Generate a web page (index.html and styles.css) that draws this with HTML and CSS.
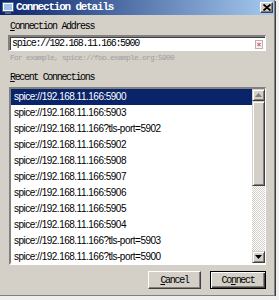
FILE: index.html
```html
<!DOCTYPE html>
<html lang="en">
<head>
<meta charset="UTF-8" />
<meta name="viewport" content="width=device-width, initial-scale=1.0" />
<title>Connection details</title>
<link rel="stylesheet" href="styles.css">
</head>
<body>

<div class="window">
  <!-- Title bar -->
  <div class="titlebar">
    <svg class="app-icon" width="12" height="12" viewBox="0 0 12 12">
      <rect x="0.5" y="0.5" width="11" height="9" fill="#fff" stroke="#56648c"/>
      <rect x="2" y="2" width="8" height="6" fill="#9cc0ec"/>
      <rect x="3" y="10" width="6" height="2" fill="#56648c"/>
    </svg>
    <span class="title">Connection details</span>
    <div class="close">
      <svg width="8" height="7" viewBox="0 0 8 7">
        <path d="M0.5 0.5 L7.5 6.5 M7.5 0.5 L0.5 6.5" stroke="#000" stroke-width="1.8"/>
      </svg>
    </div>
  </div>

  <div class="content">
    <div class="label"><u>C</u>onnection Address</div>
    <div class="input">
      <span class="input-text">spice://192.168.11.166:5900</span>
      <svg class="clear" width="8" height="9" viewBox="0 0 8 9">
        <rect x="0.5" y="0.5" width="7" height="8" fill="#f6f6f6" stroke="#b4b4b4"/>
        <path d="M2.5 3 L5.5 6 M5.5 3 L2.5 6" stroke="#e8607a" stroke-width="1.2"/>
      </svg>
    </div>
    <div class="hint">For example, spice://foo.example.org:5900</div>

    <div class="label label-recent"><u>R</u>ecent Connections</div>
    <div class="list">
      <ul class="rows">
        <li class="selected">spice://192.168.11.166:5900</li>
        <li>spice://192.168.11.166:5903</li>
        <li>spice://192.168.11.166?tls-port=5902</li>
        <li>spice://192.168.11.166:5902</li>
        <li>spice://192.168.11.166:5908</li>
        <li>spice://192.168.11.166:5907</li>
        <li>spice://192.168.11.166:5906</li>
        <li>spice://192.168.11.166:5905</li>
        <li>spice://192.168.11.166:5904</li>
        <li>spice://192.168.11.166?tls-port=5903</li>
        <li>spice://192.168.11.166?tls-port=5900</li>
      </ul>
      <div class="scrollbar">
        <div class="sb-btn">
          <svg width="7" height="4" viewBox="0 0 7 4"><path d="M3.5 0 L7 4 L0 4 Z" fill="#808080"/></svg>
        </div>
        <div class="sb-thumb"></div>
        <div class="sb-track"></div>
        <div class="sb-btn">
          <svg width="7" height="4" viewBox="0 0 7 4"><path d="M0 0 L7 0 L3.5 4 Z" fill="#000"/></svg>
        </div>
      </div>
    </div>

    <div class="buttons">
      <div class="btn"><u>C</u>ancel</div>
      <div class="btn btn-default">Co<u>n</u>nect</div>
    </div>
  </div>
</div>

</body>
</html>
```

FILE: styles.css
```css
body {
  margin: 0;
  background-color: #f0f0f0;
  font-family: "Liberation Mono", monospace;
}

.window {
  width: 274px;
  height: 295px;
  background-color: #d4d0c8;
  border-right: 1px solid #808080;
  border-bottom: 1px solid #808080;
  box-shadow: 1px 1px 0 #404040;
  overflow: hidden;
}

.titlebar {
  height: 15px;
  display: flex;
  align-items: center;
  background: linear-gradient(to right, #0a246a, #a6caf0);
  padding-left: 2px;
}

.app-icon {
  flex: none;
}

.title {
  margin-left: 2px;
  color: white;
  font-weight: bold;
  font-size: 11px;
  letter-spacing: -1.2px;
  line-height: 15px;
}

.close {
  margin-left: auto;
  margin-right: 1px;
  width: 11px;
  height: 9px;
  display: flex;
  align-items: center;
  justify-content: center;
  background-color: #d4d0c8;
  border-top: 1px solid #fff;
  border-left: 1px solid #fff;
  border-right: 1px solid #404040;
  border-bottom: 1px solid #404040;
  box-shadow: inset -1px -1px 0 #808080;
}

.content {
  padding: 6px 8px 0 8px;
  display: flex;
  flex-direction: column;
}

.label {
  height: 12px;
  line-height: 12px;
  padding-left: 2px;
  font-size: 10px;
  letter-spacing: -1.33px;
  color: #000;
}

.label-recent {
  margin-top: 9px;
}

.input {
  margin-top: 2px;
  height: 11px;
  display: flex;
  align-items: center;
  background-color: white;
  border-top: 2px solid #808080;
  border-left: 2px solid #808080;
  border-right: 1px solid #fff;
  border-bottom: 1px solid #fff;
  box-shadow: inset 1px 1px 0 #404040;
  padding: 1px 2px 1px 2px;
}

.input-text {
  font-size: 10px;
  letter-spacing: -1.3px;
  color: #000;
}

.clear {
  margin-left: auto;
  margin-top: 2px;
}

.hint {
  margin-top: 2px;
  height: 10px;
  line-height: 10px;
  padding-left: 2px;
  font-size: 8px;
  letter-spacing: -0.8px;
  color: #a0a0a0;
}

.list {
  margin-top: 3px;
  margin-left: 1px;
  height: 174px;
  display: flex;
  background-color: white;
  border-top: 2px solid #808080;
  border-left: 2px solid #808080;
  border-right: 1px solid #fff;
  border-bottom: 2px solid #fff;
}

.rows {
  flex: 1;
  margin: 0;
  padding: 0;
  list-style: none;
  overflow: hidden;
}

.rows li {
  height: 16px;
  line-height: 16px;
  padding-left: 3px;
  font-family: "Liberation Sans", Arial, sans-serif;
  font-size: 10px;
  letter-spacing: -0.5px;
  color: #000;
  white-space: nowrap;
}

.rows li.selected {
  background-color: #0a246a;
  color: white;
}

.scrollbar {
  width: 13px;
  display: flex;
  flex-direction: column;
}

.sb-btn,
.sb-thumb {
  box-sizing: border-box;
  background-color: #d4d0c8;
  border-top: 1px solid #d4d0c8;
  border-left: 1px solid #d4d0c8;
  border-right: 1px solid #404040;
  border-bottom: 1px solid #404040;
  box-shadow: inset 1px 1px 0 #fff, inset -1px -1px 0 #808080;
}

.sb-btn {
  height: 12px;
  display: flex;
  align-items: center;
  justify-content: center;
}

.sb-thumb {
  height: 85px;
}

.sb-track {
  flex: 1;
  background-image: repeating-conic-gradient(#fff 0 25%, #d4d0c8 0 50%);
  background-size: 2px 2px;
}

.buttons {
  margin-top: 6px;
  display: flex;
  justify-content: flex-end;
  gap: 9px;
}

.btn {
  box-sizing: border-box;
  width: 53px;
  height: 18px;
  display: flex;
  align-items: center;
  justify-content: center;
  font-size: 10px;
  letter-spacing: -1.3px;
  background-color: #d4d0c8;
  border-top: 1px solid #fff;
  border-left: 1px solid #fff;
  border-right: 1px solid #404040;
  border-bottom: 1px solid #404040;
  box-shadow: inset -1px -1px 0 #808080;
}

.btn-default {
  width: 56px;
  border: 1px solid #000;
  box-shadow: inset 1px 1px 0 #fff, inset -1px -1px 0 #404040, inset -2px -2px 0 #808080;
}
```
